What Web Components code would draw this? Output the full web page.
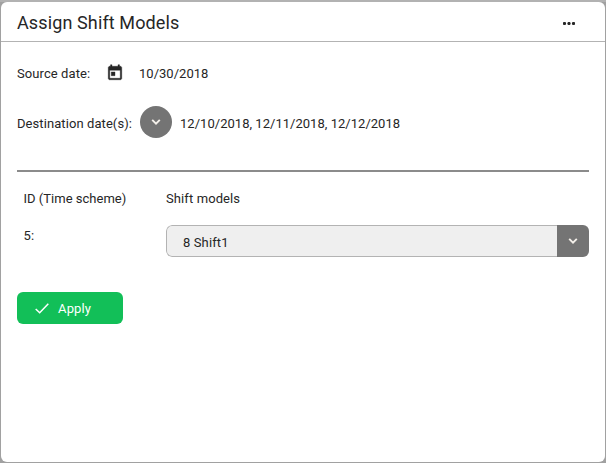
<!DOCTYPE html>
<html lang="en"><head><meta charset="utf-8"><title>Assign Shift Models</title>
<style>
html,body{margin:0;height:100%}
body{background:#a1a1a1;color:#262626;font:13px/20px Roboto,"Liberation Sans",sans-serif;overflow:hidden}
</style></head><body>
<shift-dialog>
<span slot="title">Assign Shift Models</span>
<date-row><span slot="label">Source date:</span><ui-icon slot="control" name="calendar"></ui-icon><span slot="value">10/30/2018</span></date-row>
<date-row class="dest"><span slot="label">Destination date(s):</span><round-button slot="control"></round-button><span slot="value">12/10/2018, 12/11/2018, 12/12/2018</span></date-row>
<scheme-table></scheme-table>
<apply-button>Apply</apply-button>
</shift-dialog>
<script>
function define(name, html) {
  customElements.define(name, class extends HTMLElement {
    constructor() { super(); this.attachShadow({mode:'open'}).innerHTML = html; }
  });
}
const icons = {
  calendar: ['0 0 24 24', 18, 18, '<path fill="currentColor" stroke="currentColor" stroke-width=".5" d="M19 3h-1V1h-2v2H8V1H6v2H5c-1.1 0-2 .9-2 2v14c0 1.1.9 2 2 2h14c1.1 0 2-.9 2-2V5c0-1.1-.9-2-2-2zm0 16H5V8.4h14V19zM7 10.6h5v5H7z"/>'],
  chevron: ['0 0 10 6', 10, 6, '<path d="M1.2 .8 5 4.6 8.8 .8" fill="none" stroke="currentColor" stroke-width="1.9"/>'],
  check: ['0 0 14 11', 14, 11, '<path d="M.7 6 4.7 9.8 13.3 .8" fill="none" stroke="currentColor" stroke-width="1.5"/>'],
  more: ['0 0 12 3', 12, 3, '<g fill="currentColor"><circle cx="1.5" cy="1.5" r="1.6"/><circle cx="6" cy="1.5" r="1.6"/><circle cx="10.5" cy="1.5" r="1.6"/></g>']
};
customElements.define('ui-icon', class extends HTMLElement {
  constructor() { super(); this.attachShadow({mode:'open'}); }
  connectedCallback() {
    const [vb,w,h,body] = icons[this.getAttribute('name')];
    this.shadowRoot.innerHTML = `<style>:host{display:block;flex:none}svg{display:block}</style><svg width="${w}" height="${h}" viewBox="${vb}">${body}</svg>`;
  }
});
define('round-button', `<style>:host{display:grid;place-items:center;width:32px;height:32px;border-radius:50%;background:#747474;color:#f4f0ea}</style><ui-icon name="chevron"></ui-icon>`);
define('date-row', `<style>
:host{display:flex;align-items:center;height:32px}
.l{width:74px;letter-spacing:.08px}.c{margin-left:15px}.v{margin-left:15px;letter-spacing:.02px}
.l,.v{padding-top:2px;white-space:nowrap}
:host(.dest){margin-top:17px}:host(.dest) .l{width:115px}:host(.dest) .c{margin-left:8px}:host(.dest) .v{margin-left:8px;letter-spacing:.03px}
:host(.dest) .l,:host(.dest) .v{padding-top:4px}
</style><div class="l"><slot name="label"></slot></div><div class="c"><slot name="control"></slot></div><div class="v"><slot name="value"></slot></div>`);
define('shift-select', `<style>
:host{display:flex;height:32px;border-radius:6px;overflow:hidden}
.f{flex:1;box-sizing:border-box;border:1px solid #b3b3b3;border-right:0;border-radius:6px 0 0 6px;background:#efefef;padding:7px 0 0 16px;letter-spacing:.12px}
.b{width:32px;background:#747474;color:#f4f0ea;display:grid;place-items:center}
</style><div class="f"><slot></slot></div><div class="b"><ui-icon name="chevron"></ui-icon></div>`);
define('scheme-table', `<style>
:host{display:grid;grid-template-columns:142.5px 1fr;grid-template-rows:36px 32px;border-top:2px solid #8b8b8b;margin-top:32px;padding:17px 0 0 6.5px;letter-spacing:.1px}
.id{letter-spacing:.01px}.n{padding-top:1px}
</style><div class="id">ID (Time scheme)</div><div>Shift models</div><div class="n">5:</div><shift-select>8 Shift1</shift-select>`);
define('apply-button', `<style>
:host{display:flex;align-items:center;box-sizing:border-box;width:106px;height:32px;margin-top:35px;padding-left:18px;gap:9px;border-radius:6px;background:#12bf58;color:#fff;letter-spacing:.15px}
div{padding-top:1px}
</style><ui-icon name="check"></ui-icon><div><slot></slot></div>`);
define('shift-dialog', `<style>
:host{display:block;box-sizing:border-box;height:463px;padding:2px 1px 1px;background:linear-gradient(#b2b2b2 0 2px,#a1a1a1 2px)}
section{box-sizing:border-box;height:460px;background:#fff;border-radius:6px}
header{display:flex;align-items:center;justify-content:space-between;box-sizing:border-box;height:40px;padding:2px 30px 0 16px;border-bottom:1px solid #b3b3b3;font-size:18px;line-height:24px;letter-spacing:.12px}
header ui-icon{margin-top:2px}
main{padding:15px 16px 0}
</style><section><header><slot name="title"></slot><ui-icon name="more"></ui-icon></header><main><slot></slot></main></section>`);
</script></body></html>
